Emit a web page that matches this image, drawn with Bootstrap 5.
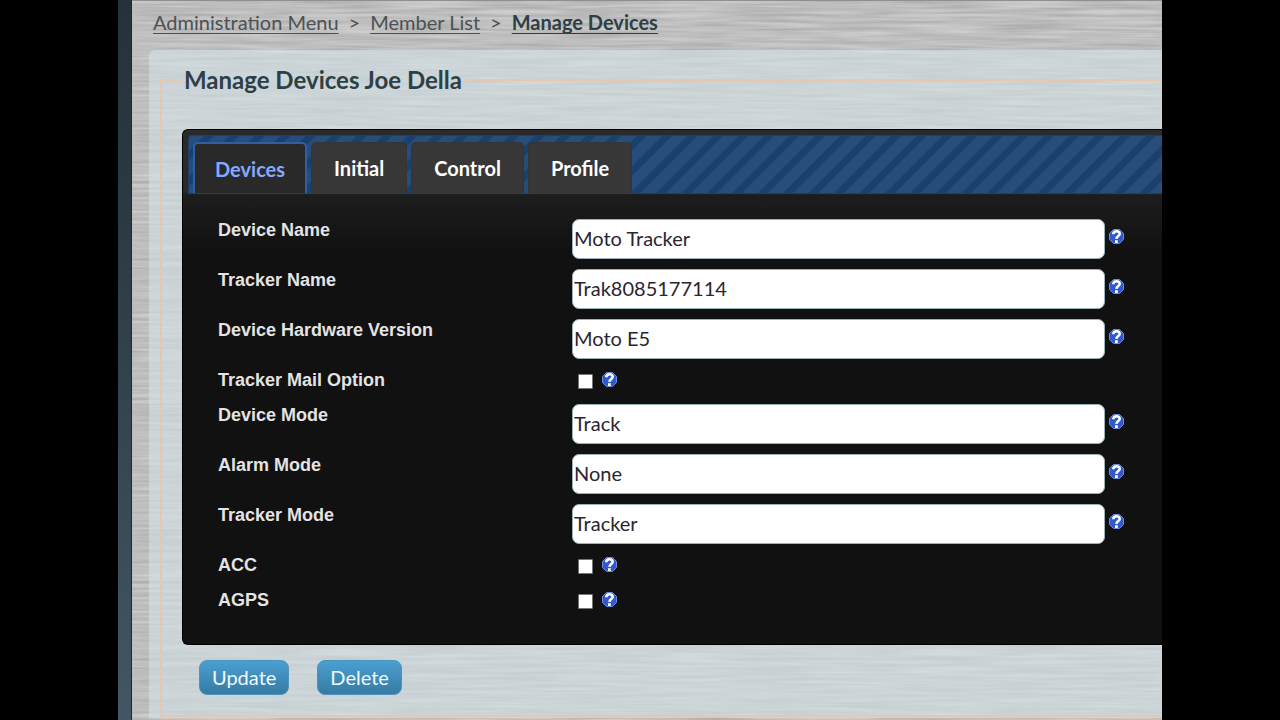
<!DOCTYPE html>
<html lang="en">
<head>
<meta charset="utf-8">
<meta name="viewport" content="width=device-width, initial-scale=1">
<title>Manage Devices</title>
<link href="https://cdn.jsdelivr.net/npm/bootstrap@5.3.0/dist/css/bootstrap.min.css" rel="stylesheet">
<style>
  body { background: #000; font-family: Lato, "Noto Sans", sans-serif; font-size: 20px; line-height: 28px; color: #4a5254; }
  .stage { min-height: 100vh; margin: 0 118px; overflow: hidden; }
  .rail { flex: 0 0 14px; background: linear-gradient(#26323a, #2b3a42 30%, #435663); border-right: 1px solid #1d2a30; }
  .brushed { min-width: 0; padding: 7px 0 0 17px; border-top: 1px solid #8f8f8f;
    background: #bfbfbf url("data:image/svg+xml,%3Csvg xmlns='http://www.w3.org/2000/svg' width='600' height='400'%3E%3Cfilter id='f' x='0' y='0' width='1' height='1' color-interpolation-filters='sRGB'%3E%3CfeTurbulence type='fractalNoise' baseFrequency='.012 .3' numOctaves='3' seed='4' stitchTiles='stitch'/%3E%3CfeColorMatrix values='.2 0 0 0 .65 .2 0 0 0 .645 .2 0 0 0 .645 0 0 0 0 1'/%3E%3C/filter%3E%3Crect width='600' height='400' filter='url(%23f)'/%3E%3C/svg%3E"); }
  .trail { --bs-breadcrumb-divider: ">"; margin: 0 0 14px 4px; font-size: 20px; --bs-breadcrumb-item-padding-x: 10px; --bs-breadcrumb-divider-color: #4a5254; }
  .trail a { color: #4a5254; text-underline-offset: 3px; text-decoration-thickness: 1px; }
  .trail .active a { color: #2d4046; font-weight: 700; }
  .sheet { background: rgba(212, 226, 231, .6); border-radius: 6px 0 0 0; padding: 15px 0 1px 11px; }
  .frame { border: 2px solid #e6c8ae; border-right: 0; padding: 0 0 20px 20px; margin: 0; }
  .frame legend { float: none; width: auto; margin: 0 0 34px; padding: 0 3px 0 2px; font-size: 24px; line-height: 30px; font-weight: 700; color: #2d4046; }
  .console { border: 1px solid #000; border-right: 0; border-radius: 6px 0 0 6px; background: linear-gradient(#2a2a2a 0 62px, #1d1d1d 65px, #111 122px); padding: 5px 0 30px; }
  .strip { margin-left: 5px; padding: 6px 0 0 4px; gap: 4px; border: 1px solid #1d4068; border-right: 0; border-radius: 4px 0 0 0;
    background: repeating-linear-gradient(135deg, #274e7b 0 10px, #1a406d 11px 17px, #274e7b 18px); }
  .strip .nav-link { height: 51px; padding: 0 22px; border: 1px solid #343434; border-bottom: 0; border-radius: 5px 5px 0 0; margin: 0; background: #373737; color: #fff; font-weight: 700; font-size: 20px; line-height: 46px; }
  .strip .nav-link.active { background: #292929; color: #84a9ff; border: 2px solid #2c5fa5; border-bottom: 0; padding: 0 20px; line-height: 44px; }
  .fields { padding: 25px 38px 0 35px; }
  .line { display: grid; grid-template-columns: 354px 1fr; margin-bottom: 10px; }
  .line > label { font: bold 18px/22px "Liberation Sans", Arial, sans-serif; color: #e3e3e3; }
  .line .form-control { height: 40px; padding: 0 1px 2px; border: 1px solid #9ab2b6; border-radius: 7px; background: #fff; color: #2a2530; font-size: 20px; line-height: 28px; }
  .line .form-check-input { width: 15px; height: 15px; margin: 5px 1px 0 6px; border: 1px solid #767676; border-radius: 1px; background-color: #fff; }
  .ticked { height: 25px; }
  .hint { width: 15px; height: 15px; flex: none; display: block; margin: 10px 0 0 4px; }
  .ticked .hint { margin: 3px 0 0 8px; }
  .actions { gap: 28px; margin: 15px 0 0 17px; }
  .actions .btn { height: 35px; padding: 0 12px 2px; border: 1px solid #4a94be; border-radius: 8px; background: linear-gradient(#4a9fd2, #367ba2); color: #f1faff; font-size: 20px; line-height: 30px; }
</style>
</head>
<body>
<svg class="d-none" aria-hidden="true">
  <symbol id="help" viewBox="0 0 15 15">
    <path d="M4.5 .5h6l4 4v6l-4 4h-6l-4-4v-6z" fill="#3158cf" stroke="#7089d8" stroke-width="1"/>
    <path d="M4.3 5.2C4.5 1.4 10.9 1.4 10.7 5 10.6 7 7.6 7 7.4 9.8" fill="none" stroke="#fff" stroke-width="2.6"/>
    <path d="M6 11.2h2.8v2.8H6z" fill="#fff"/>
  </symbol>
</svg>
<div class="stage d-flex">
  <div class="rail"></div>
  <main class="brushed flex-grow-1">
    <nav aria-label="Breadcrumb">
      <ol class="breadcrumb trail">
        <li class="breadcrumb-item"><a href="#">Administration Menu</a></li>
        <li class="breadcrumb-item"><a href="#">Member List</a></li>
        <li class="breadcrumb-item active" aria-current="page"><a href="#">Manage Devices</a></li>
      </ol>
    </nav>
    <form class="sheet">
      <fieldset class="frame">
        <legend>Manage Devices Joe Della</legend>
        <div class="console">
          <div class="nav strip" role="tablist">
            <button class="nav-link active" type="button" role="tab" aria-selected="true">Devices</button>
            <button class="nav-link" type="button" role="tab" aria-selected="false">Initial</button>
            <button class="nav-link" type="button" role="tab" aria-selected="false">Control</button>
            <button class="nav-link" type="button" role="tab" aria-selected="false">Profile</button>
          </div>
          <div class="fields">
            <div class="line"><label for="deviceName">Device Name</label><div class="d-flex"><input class="form-control" id="deviceName" type="text" value="Moto Tracker"><svg class="hint"><use href="#help"/></svg></div></div>
            <div class="line"><label for="trackerName">Tracker Name</label><div class="d-flex"><input class="form-control" id="trackerName" type="text" value="Trak8085177114"><svg class="hint"><use href="#help"/></svg></div></div>
            <div class="line"><label for="hardware">Device Hardware Version</label><div class="d-flex"><input class="form-control" id="hardware" type="text" value="Moto E5"><svg class="hint"><use href="#help"/></svg></div></div>
            <div class="line ticked"><label for="mail">Tracker Mail Option</label><div class="d-flex"><input class="form-check-input" id="mail" type="checkbox"><svg class="hint"><use href="#help"/></svg></div></div>
            <div class="line"><label for="deviceMode">Device Mode</label><div class="d-flex"><input class="form-control" id="deviceMode" type="text" value="Track"><svg class="hint"><use href="#help"/></svg></div></div>
            <div class="line"><label for="alarmMode">Alarm Mode</label><div class="d-flex"><input class="form-control" id="alarmMode" type="text" value="None"><svg class="hint"><use href="#help"/></svg></div></div>
            <div class="line"><label for="trackerMode">Tracker Mode</label><div class="d-flex"><input class="form-control" id="trackerMode" type="text" value="Tracker"><svg class="hint"><use href="#help"/></svg></div></div>
            <div class="line ticked"><label for="acc">ACC</label><div class="d-flex"><input class="form-check-input" id="acc" type="checkbox"><svg class="hint"><use href="#help"/></svg></div></div>
            <div class="line ticked mb-0"><label for="agps">AGPS</label><div class="d-flex"><input class="form-check-input" id="agps" type="checkbox"><svg class="hint"><use href="#help"/></svg></div></div>
          </div>
        </div>
        <div class="actions d-flex">
          <button class="btn" type="button">Update</button>
          <button class="btn" type="button">Delete</button>
        </div>
      </fieldset>
    </form>
  </main>
</div>
<script src="https://cdn.jsdelivr.net/npm/bootstrap@5.3.0/dist/js/bootstrap.bundle.min.js"></script>
</body>
</html>
